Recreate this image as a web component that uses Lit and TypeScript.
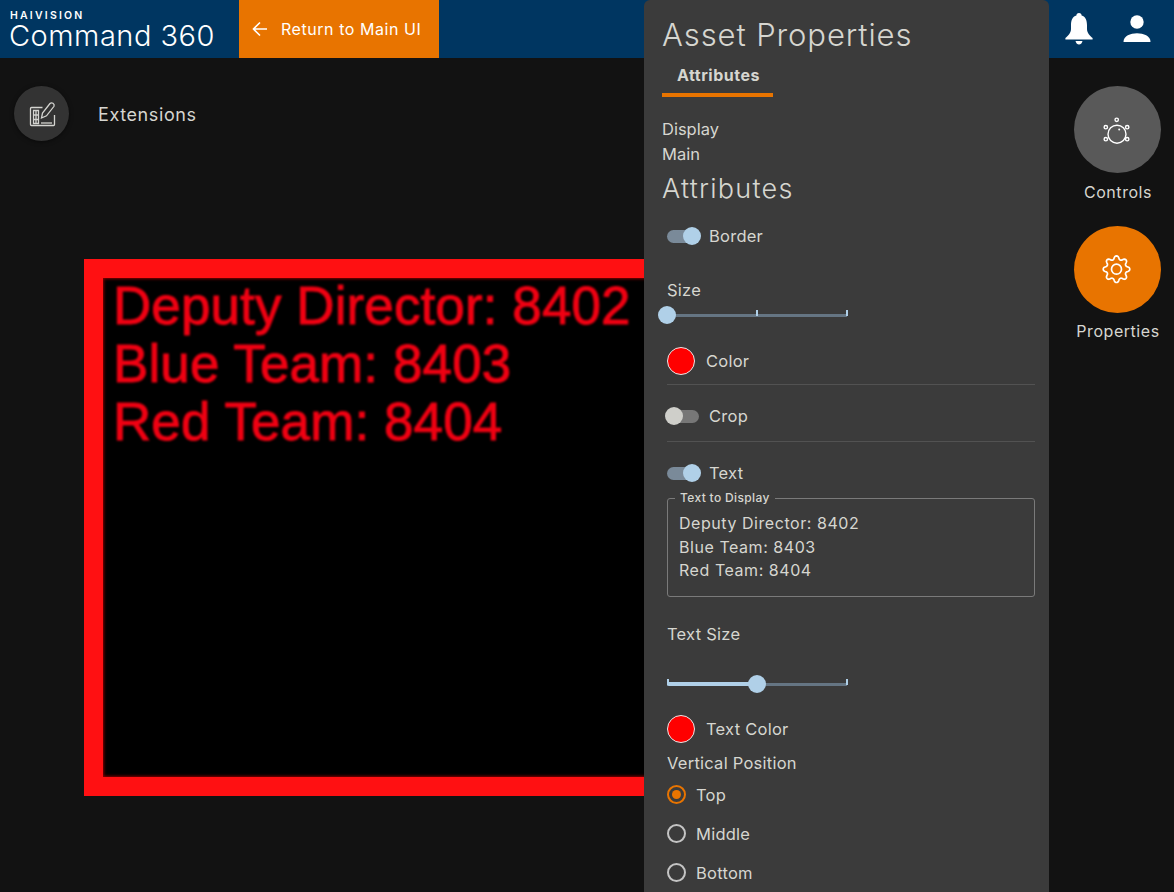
import { LitElement, html, css, svg } from "lit";
import { customElement } from "lit/decorators.js";

function gearPath(cx: number, cy: number, r: number, amp: number, teeth: number) {
  const pts: string[] = [];
  const n = teeth * 12;
  for (let i = 0; i < n; i++) {
    const t = (i / n) * Math.PI * 2;
    const c = Math.cos(teeth * t);
    const s = Math.sign(c) * Math.pow(Math.abs(c), 0.6);
    const rr = r + amp * s;
    pts.push(`${(cx + rr * Math.sin(t)).toFixed(2)} ${(cy - rr * Math.cos(t)).toFixed(2)}`);
  }
  return `M${pts.join("L")}Z`;
}

@customElement("app-root")
export class AppRoot extends LitElement {
  static styles = css`
    :host {
      display: block;
      position: relative;
      width: 100%;
      height: 892px;
      overflow: hidden;
      background: #121212;
      color: #d6d6d0;
      font-family: Inter, "Liberation Sans", sans-serif;
      font-size: 16px;
    }
    .header {
      height: 58px;
      background: #003661;
      display: flex;
      align-items: stretch;
    }
    .brand {
      width: 239px;
      box-sizing: border-box;
      padding: 10px 0 0 10px;
      color: #fff;
    }
    .brand-top {
      font-size: 10.5px;
      font-weight: 600;
      letter-spacing: 2.2px;
      line-height: 11px;
      height: 11px;
    }
    .brand-name {
      font-size: 29px;
      font-weight: 300;
      line-height: 30px;
      letter-spacing: 0.5px;
      margin-left: -1px;
      white-space: nowrap;
    }
    .return {
      width: 200px;
      background: #e87400;
      color: #fff;
      display: flex;
      align-items: center;
      box-sizing: border-box;
      padding-left: 13px;
      gap: 13px;
      font-size: 16px;
      letter-spacing: 0.55px;
      white-space: nowrap;
    }
    .return svg { width: 16px; height: 16px; }
    .spacer { flex: 1; }
    .hicons {
      display: flex;
      align-items: center;
      gap: 29.5px;
      padding-right: 22px;
    }
    .hicons svg { display: block; fill: #fff; }
    .main {
      display: flex;
      height: 834px;
    }
    .left {
      flex: 1;
      min-width: 0;
      padding: 28px 0 0 14px;
    }
    .ext {
      display: flex;
      align-items: center;
      gap: 29px;
      height: 55px;
      font-size: 18px;
      letter-spacing: 0.6px;
    }
    .ext-label { padding-top: 2px; }
    .ext-btn {
      width: 55px;
      height: 55px;
      border-radius: 50%;
      background: #333;
      display: flex;
      align-items: center;
      justify-content: center;
      box-shadow: 0 1px 4px rgba(0,0,0,.5);
    }
    .video {
      margin: 118px 0 0 70px;
      width: 640px;
      height: 537px;
      box-sizing: border-box;
      border: 19px solid #ff1012;
      background: #000;
      overflow: hidden;
      position: relative;
    }
    .video::after {
      content: "";
      position: absolute;
      inset: 0;
      box-shadow: inset 0 0 3px 1px #800;
    }
    .video-text {
      font-family: "Liberation Sans", Arial, sans-serif;
      font-size: 53px;
      line-height: 58px;
      letter-spacing: 0.1px;
      color: #f00012;
      padding: 0 0 0 10px;
      margin-top: -1px;
      white-space: nowrap;
      filter: blur(0.9px);
      -webkit-text-stroke: 0.9px #f00012;
    }
    .rail {
      width: 114px;
      display: flex;
      flex-direction: column;
      align-items: center;
      padding-top: 28px;
      box-sizing: border-box;
    }
    .rail-item {
      display: flex;
      flex-direction: column;
      align-items: center;
      height: 140px;
      font-size: 16px;
      letter-spacing: 0.55px;
    }
    .rail-label { padding-left: 2px; }
    .rail-btn {
      width: 87px;
      height: 87px;
      border-radius: 50%;
      display: flex;
      align-items: center;
      justify-content: center;
      margin-bottom: 9px;
    }
    .grey { background: #595959; }
    .orange { background: #e87400; margin-bottom: 8px; }
    .panel {
      position: absolute;
      left: 644px;
      top: 0;
      width: 405px;
      height: 892px;
      background: #3b3b3b;
      border-radius: 6px 6px 0 0;
      box-sizing: border-box;
      padding-left: 18px;
      overflow: hidden;
      display: flex;
      flex-direction: column;
    }
    .panel > * { flex-shrink: 0; }
    .title {
      font-size: 31px;
      font-weight: 300;
      line-height: 36px;
      margin-top: 17px;
      letter-spacing: 0.9px;
      white-space: nowrap;
    }
    .tab {
      width: 111px;
      height: 44px;
      box-sizing: border-box;
      border-bottom: 4px solid #e87400;
      font-weight: 700;
      font-size: 16px;
      letter-spacing: 0.5px;
      text-align: center;
      margin-bottom: 20px;
    }
    .tab span { display: block; line-height: 22px; padding: 11px 0 0 2px; }
    .line { height: 25px; line-height: 25px; font-size: 16.5px; }
    .h2 {
      font-size: 27px;
      font-weight: 300;
      height: 44px;
      line-height: 44px;
      letter-spacing: 1.25px;
    }
    .body {
      padding-left: 5px;
      width: 368px;
      font-size: 16.5px;
      letter-spacing: 0.25px;
      display: flex;
      flex-direction: column;
    }
    .row { display: flex; align-items: center; }
    .toggle {
      position: relative;
      width: 32px;
      height: 13px;
      border-radius: 7px;
      background: #7a8a99;
      margin-right: 10px;
    }
    .toggle i {
      position: absolute;
      top: -2.5px;
      right: -2px;
      width: 18px;
      height: 18px;
      border-radius: 50%;
      background: #b0d0e8;
    }
    .toggle.off { background: #777; }
    .toggle.off i { right: auto; left: -2px; background: #cfcfca; }
    .swatch {
      width: 26px;
      height: 26px;
      border-radius: 50%;
      background: #f00;
      border: 1px solid #e8e8e8;
      margin-right: 11px;
    }
    .slider { position: relative; width: 180px; height: 18px; }
    .track {
      position: absolute;
      left: 0; right: 0; top: 8px;
      height: 3px;
      background: #657583;
    }
    .fill {
      position: absolute;
      left: 0; top: 7px;
      height: 4px;
      background: #b0d0e8;
      border-radius: 2px;
    }
    .tick {
      position: absolute;
      top: 4px;
      width: 2px;
      height: 6px;
      background: #b0d0e8;
    }
    .thumb {
      position: absolute;
      top: 0;
      width: 18px;
      height: 18px;
      margin-left: -9px;
      border-radius: 50%;
      background: #b0d0e8;
    }
    .divider { height: 1px; background: #525252; }
    .box {
      position: relative;
      height: 99px;
      box-sizing: border-box;
      border: 1px solid #7a7a7a;
      border-radius: 3px;
      padding: 13px 11px;
      font-size: 16px;
      letter-spacing: 0.55px;
      line-height: 23.5px;
    }
    .box label {
      position: absolute;
      left: 7px;
      top: -8px;
      padding: 0 5px;
      background: #3b3b3b;
      font-size: 12px;
      font-weight: 500;
      letter-spacing: 0.35px;
      line-height: 14px;
    }
    .radio {
      width: 19px;
      height: 19px;
      box-sizing: border-box;
      border: 2px solid #c4c4c4;
      border-radius: 50%;
      margin-right: 10px;
      display: flex;
      align-items: center;
      justify-content: center;
    }
    .radio.on { border-color: #e87400; }
    .radio.on i { width: 9px; height: 9px; border-radius: 50%; background: #e87400; }
    .r39 { height: 39px; }
  `;

  private toggle(on: boolean) {
    return html`<div class="toggle ${on ? "" : "off"}"><i></i></div>`;
  }

  private radio(label: string, on: boolean) {
    return html`<div class="row r39"><div class="radio ${on ? "on" : ""}"><i></i></div>${label}</div>`;
  }

  render() {
    return html`
      <div class="header">
        <div class="brand">
          <div class="brand-top">HAIVISION</div>
          <div class="brand-name">Command 360</div>
        </div>
        <div class="return">
          <svg viewBox="0 0 16 16" fill="none" stroke="#fff" stroke-width="1.6"><path d="M15 8H1.5M8 1.5 1.5 8 8 14.5"/></svg>
          Return to Main UI
        </div>
        <div class="spacer"></div>
        <div class="hicons">
          <svg width="28" height="34" viewBox="0 0 28 34">
            <path d="M14 1a2.600 2.600 0 0 1 2.600 2.600c4 1.200 5.400 5 5.400 9.400v4c0 4 3 7 5.600 9v1.500H0.400v-1.500c2.600-2 5.600-5 5.600-9v-4c0-4.400 1.400-8.200 5.400-9.400A2.600 2.600 0 0 1 14 1z"/>
            <path d="M10.500 29h7q-1 3.500-3.500 3.500t-3.500-3.500z"/>
          </svg>
          <svg width="30" height="30" viewBox="0 0 30 30">
            <circle cx="15" cy="8" r="6.700"/>
            <path d="M1.500 28c0-6 7-8.700 13.500-8.700s13.500 2.700 13.500 8.700z"/>
          </svg>
        </div>
      </div>
      <div class="main">
        <div class="left">
          <div class="ext">
            <div class="ext-btn">
              <svg width="28" height="28" viewBox="0 0 28 28" fill="none" stroke="#d4d4d0" stroke-width="1.300">
                <path d="M14.500 7.500H3.500a1 1 0 0 0-1 1v16a1 1 0 0 0 1 1h22a1 1 0 0 0 1-1V15"/>
                <path d="M5.500 10.500h5v13h-5zM5.500 15h5M5.500 19.500h5M8 10.500v13"/>
                <path d="M13.500 18l1-5 7.500-9.500q1.300-1.300 3-0.200t1 3l-7.500 9.500z"/>
                <path d="M13 23h11"/>
              </svg>
            </div>
            <span class="ext-label">Extensions</span>
          </div>
          <div class="video">
            <div class="video-text">Deputy Director: 8402<br />Blue Team: 8403<br />Red Team: 8404</div>
          </div>
        </div>
        <div class="rail">
          <div class="rail-item">
            <div class="rail-btn grey">
              <svg width="30" height="30" viewBox="0 0 30 30" fill="none" stroke="#fff" stroke-width="1.400">
                <circle cx="15" cy="19.200" r="9"/>
                <circle cx="14.700" cy="4.800" r="1.700"/><circle cx="3.800" cy="12.200" r="1.700"/><circle cx="25.200" cy="12.200" r="1.700"/>
                <circle cx="3.800" cy="24.200" r="1.700"/><circle cx="25.200" cy="24.200" r="1.700"/>
                <circle cx="17.200" cy="14.500" r="1" fill="#fff" stroke="none"/>
              </svg>
            </div>
            <span class="rail-label">Controls</span>
          </div>
          <div class="rail-item">
            <div class="rail-btn orange">
              <svg width="30" height="30" viewBox="0 0 30 30" fill="none" stroke="#fff" stroke-width="1.700">
                ${svg`<path d=${gearPath(14.5, 14.2, 11.6, 1.7, 8)} stroke-linejoin="round"/>`}
                <circle cx="14.500" cy="14.200" r="5"/>
              </svg>
            </div>
            <span class="rail-label">Properties</span>
          </div>
        </div>
      </div>
      <div class="panel">
        <div class="title">Asset Properties</div>
        <div class="tab"><span>Attributes</span></div>
        <div class="line">Display</div>
        <div class="line">Main</div>
        <div class="h2">Attributes</div>
        <div class="body">
          <div class="row" style="height:50px">${this.toggle(true)}Border</div>
          <div class="row" style="height:28px;margin-top:15px">Size</div>
          <div class="slider" style="margin-top:2px">
            <div class="track"></div>
            <div class="tick" style="left:89px"></div>
            <div class="tick" style="left:179px"></div>
            <div class="thumb" style="left:0"></div>
          </div>
          <div class="row" style="height:40px;margin-top:17px">
            <div class="swatch"></div>Color
          </div>
          <div class="divider" style="margin-top:3px"></div>
          <div class="row" style="height:56px;padding-top:6px;box-sizing:border-box">${this.toggle(false)}Crop</div>
          <div class="divider"></div>
          <div class="row" style="height:56px;margin-top:3px">${this.toggle(true)}Text</div>
          <div class="box" style="margin-top:-3px">
            <label>Text to Display</label>
            Deputy Director: 8402<br />Blue Team: 8403<br />Red Team: 8404
          </div>
          <div class="row" style="height:28px;margin-top:23px">Text Size</div>
          <div class="slider" style="margin-top:27px">
            <div class="track"></div>
            <div class="tick" style="left:0"></div>
            <div class="tick" style="left:179px"></div>
            <div class="fill" style="width:90px"></div>
            <div class="thumb" style="left:90px"></div>
          </div>
          <div class="row" style="height:40px;margin-top:16px">
            <div class="swatch"></div>Text Color
          </div>
          <div class="row" style="height:26px;padding-top:2px;box-sizing:border-box">Vertical Position</div>
          ${this.radio("Top", true)}
          ${this.radio("Middle", false)}
          ${this.radio("Bottom", false)}
        </div>
      </div>
    `;
  }
}
